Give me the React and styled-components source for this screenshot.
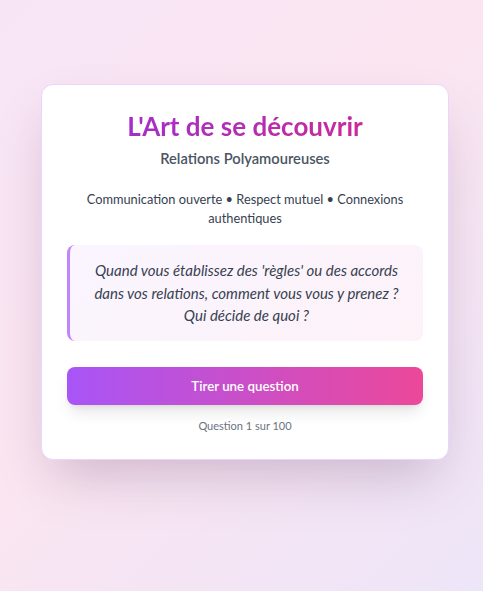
import React, { useState } from 'react';
import styled, { createGlobalStyle } from 'styled-components';

const questions = [
    "Quand vous établissez des 'règles' ou des accords dans vos relations, comment vous vous y prenez ? Qui décide de quoi ?",
];

const GlobalStyle = createGlobalStyle`
    * {
        box-sizing: border-box;
    }

    body {
        margin: 0;
        font-family: "Segoe UI", Lato, "Noto Sans", sans-serif;
    }
`;

const Page = styled.div`
    min-height: 100vh;
    padding: 84px 34px 40px 41px;
    background: linear-gradient(135deg, #f7e5f6 0%, #fbe5f1 45%, #ede5f8 100%);
`;

const Card = styled.div`
    width: 408px;
    background: #ffffff;
    border: 1px solid #e9d5ff;
    border-radius: 12px;
    padding: 25px 25px 25px;
    box-shadow: 0 25px 50px -12px rgba(80, 40, 80, 0.25);
    text-align: center;
`;

const Title = styled.h1`
    margin: 0 0 6px;
    font-size: 26px;
    line-height: 32px;
    font-weight: 700;
    background: linear-gradient(90deg, #9a2fd6, #d02b8c);
    -webkit-background-clip: text;
    background-clip: text;
    color: transparent;
`;

const Subtitle = styled.h2`
    margin: 0 0 22px;
    font-size: 14.7px;
    line-height: 20px;
    font-weight: 600;
    color: #4b5563;
`;

const Tagline = styled.p`
    margin: 0 0 17px;
    font-size: 12.8px;
    line-height: 19px;
    color: #374151;
`;

const QuestionBox = styled.div`
    padding: 14px 22px;
    border-left: 3px solid #c084fc;
    border-radius: 8px;
    background: linear-gradient(135deg, #faf5ff, #fdf2f8);
    font-size: 15px;
    line-height: 22.5px;
    font-style: italic;
    color: #374151;
`;

const DrawButton = styled.button`
    display: block;
    width: 100%;
    margin-top: 26px;
    padding: 9px 16px;
    border: 0;
    border-radius: 8px;
    background: linear-gradient(90deg, #a855f7, #ec4899);
    color: #ffffff;
    font-family: inherit;
    font-size: 13.3px;
    line-height: 20px;
    font-weight: 600;
    cursor: pointer;
    box-shadow: 0 10px 15px -3px rgba(0, 0, 0, 0.1), 0 4px 6px -4px rgba(0, 0, 0, 0.1);
`;

const Counter = styled.p`
    margin: 13px 0 0;
    font-size: 11px;
    line-height: 16px;
    color: #6b7280;
`;

export default function App() {
    const [index, setIndex] = useState(0);

    return (
        <>
            <GlobalStyle />
            <Page>
                <Card>
                    <Title>L'Art de se découvrir</Title>
                    <Subtitle>Relations Polyamoureuses</Subtitle>
                    <Tagline>Communication ouverte • Respect mutuel • Connexions authentiques</Tagline>
                    <QuestionBox>{questions[index % questions.length]}</QuestionBox>
                    <DrawButton onClick={() => setIndex(index + 1)}>Tirer une question</DrawButton>
                    <Counter>Question {(index % 100) + 1} sur 100</Counter>
                </Card>
            </Page>
        </>
    );
}
